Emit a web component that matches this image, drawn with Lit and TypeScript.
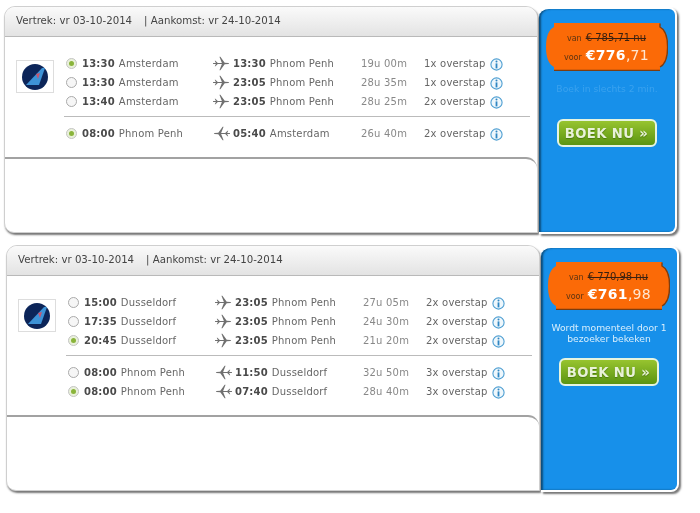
import { LitElement, html, css, svg } from "lit";
import { customElement } from "lit/decorators.js";

type Row = { on: boolean; dep: string; from: string; arr: string; to: string; dur: string; stops: string };
type Deal = {
  dep: string; arr: string; groups: { back: boolean; rows: Row[] }[];
  was: string; now: string; cents: string; note: string[]; faint: boolean; second: boolean;
};

const r = (on: boolean, dep: string, from: string, arr: string, to: string, dur: string, stops: string): Row =>
  ({ on, dep, from, arr, to, dur, stops });

const DEALS: Deal[] = [
  {
    dep: "vr 03-10-2014", arr: "vr 24-10-2014", was: "€ 785,71 nu", now: "€776", cents: ",71",
    note: ["Boek in slechts 2 min."], faint: true, second: false,
    groups: [
      { back: false, rows: [
        r(true, "13:30", "Amsterdam", "13:30", "Phnom Penh", "19u 00m", "1x overstap"),
        r(false, "13:30", "Amsterdam", "23:05", "Phnom Penh", "28u 35m", "1x overstap"),
        r(false, "13:40", "Amsterdam", "23:05", "Phnom Penh", "28u 25m", "2x overstap"),
      ] },
      { back: true, rows: [
        r(true, "08:00", "Phnom Penh", "05:40", "Amsterdam", "26u 40m", "2x overstap"),
      ] },
    ],
  },
  {
    dep: "vr 03-10-2014", arr: "vr 24-10-2014", was: "€ 770,98 nu", now: "€761", cents: ",98",
    note: ["Wordt momenteel door 1", "bezoeker bekeken"], faint: false, second: true,
    groups: [
      { back: false, rows: [
        r(false, "15:00", "Dusseldorf", "23:05", "Phnom Penh", "27u 05m", "2x overstap"),
        r(false, "17:35", "Dusseldorf", "23:05", "Phnom Penh", "24u 30m", "2x overstap"),
        r(true, "20:45", "Dusseldorf", "23:05", "Phnom Penh", "21u 20m", "2x overstap"),
      ] },
      { back: true, rows: [
        r(false, "08:00", "Phnom Penh", "11:50", "Dusseldorf", "32u 50m", "3x overstap"),
        r(true, "08:00", "Phnom Penh", "07:40", "Dusseldorf", "28u 40m", "3x overstap"),
      ] },
    ],
  },
];

const plane = (back: boolean) => html`<svg class="plane ${back ? "flip" : ""}" viewBox="0 0 18 16">
  <path fill="#707070" d="M0 7.5 L3 7.5 L1.8 5 L2.6 5 L5 7.4 L9.4 7.4 L6.8 .8 L7.8 .8 L12.4 7.3 L16.4 7.4 Q18 8 16.4 8.6 L12.4 8.7 L7.8 15.2 L6.8 15.2 L9.4 8.6 L5 8.6 L2.6 11 L1.8 11 L3 8.5 L0 8.5 Z"/>
</svg>`;

const info = svg`<circle cx="6.5" cy="6.5" r="5.6" fill="#eef7fc" stroke="#4f9fd2" stroke-width="1.1"/>
  <circle cx="6.5" cy="3.6" r="1" fill="#2f86c2"/><rect x="5.6" y="5.4" width="1.8" height="5" fill="#2f86c2"/>`;

@customElement("app-root")
export class AppRoot extends LitElement {
  static styles = css`
    :host { display: block; width: 700px; height: 513px; background: #fff; overflow: hidden;
      font-family: "DejaVu Sans", Verdana, sans-serif; }
    .page { display: flex; flex-direction: column; gap: 12px; padding: 6px 0 0 4px; filter: blur(0.35px); }
    .card { display: flex; width: 673px; }
    .card.second { margin-left: 2px; }
    .left { width: 534px; box-sizing: border-box; border: 1px solid #cfcfcf; border-radius: 11px 12px 0 10px;
      box-shadow: 1px 2px 2px #777; background: #fff; display: flex; flex-direction: column; }
    .head { height: 30px; box-sizing: border-box; display: flex; align-items: center; gap: 12px; padding: 0 0 2px 11px;
      font-size: 10.2px; color: #444; border-radius: 10px 11px 0 0;
      background: linear-gradient(#fafafa, #e3e3e3); border-bottom: 1px solid #b9b9b9; }
    .body { display: flex; padding: 0 7px 14px 11px; }
    .logo { width: 38px; height: 33px; box-sizing: border-box; border: 1px solid #ddd; margin: 23px 10px 0 0; display: flex;
      align-items: center; justify-content: center; flex: none; }
    .logo svg { width: 28px; height: 28px; }
    .rows { flex: 1; }
    .group { padding: 17px 0 5px; }
    .group.back { padding: 7px 0 0; border-top: 1px solid #bbb; }
    .row { display: grid; grid-template-columns: 18px 131px 20px 128px 63px 66px 13px; height: 19px; align-items: center;
      font-size: 10px; color: #666; white-space: nowrap; letter-spacing: 0.02em; }
    .row b { color: #4a4a4a; font-weight: 700; margin-right: 4px; }
    .dur { color: #888; }
    .radio { width: 11px; height: 11px; box-sizing: border-box; border: 1px solid #aaa; border-radius: 50%; margin-left: 2px;
      background: #f6f6f6; display: flex; align-items: center; justify-content: center; }
    .radio.on { background: #e9f1da; border-color: #c4c4c4; }
    .radio.on::after { content: ""; width: 5px; height: 5px; border-radius: 50%; background: #8ab43a; }
    .plane { width: 17px; height: 15px; display: block; }
    .plane.flip { transform: scaleX(-1); }
    .info { width: 13px; height: 13px; display: block; margin-top: 1px; }
    .foot { flex: 1; min-height: 73px; border-top: 2px solid #a2a2a2; border-top-right-radius: 11px; }
    .panel { width: 138px; margin-left: 1px; margin-top: 1px; box-sizing: border-box; background: #1790ea; border: 2px solid #fff; border-left: 0;
      border-radius: 10px 8px 8px 0; box-shadow: 2px 2px 2px #777, inset 2px 0 2px #0c4d7c; display: flex; flex-direction: column;
      align-items: center; padding-top: 14px; margin-bottom: -1px; }
    .tag { position: relative; width: 122px; height: 48px; display: flex; flex-direction: column; align-items: center; justify-content: center; gap: 4px; margin-right: 1px; }
    .tag svg { position: absolute; inset: 0; width: 100%; height: 100%; }
    .line { position: relative; display: flex; align-items: baseline; gap: 4px; white-space: nowrap; }
    .small { font-size: 8px; color: #5c3412; }
    .was { font-size: 10px; color: #3a2110; text-decoration: line-through; }
    .now { font-size: 14px; font-weight: 700; color: #fff; letter-spacing: 0.02em; }
    .now span { font-weight: 400; color: #ffe6d0; }
    .note { height: 24px; margin-top: 12px; font-size: 9.2px; line-height: 11px; text-align: center; color: #d8eefc; white-space: nowrap; }
    .note.faint { color: #3aa2ef; }
    .btn { margin-top: 12px; width: 100px; height: 28px; box-sizing: border-box; border: 2px solid #e6f4e0; border-radius: 6px;
      background: linear-gradient(#97c42f, #5b9412); color: #e9f2d8; font-size: 13.2px; font-weight: 700; display: flex; align-items: center; justify-content: center;
      letter-spacing: 0.03em; text-shadow: 0 1px 1px #4c7a10; margin-right: 1px; }
  `;

  private logo() {
    return html`<svg viewBox="0 0 28 28"><circle cx="14" cy="14" r="13" fill="#0c2559"/>
      <path d="M21 5 L24 5 L18 22 L5 22 Z" fill="#3d92d6"/>
      <path d="M15 11 L19 10 L17 16 Z" fill="#c8546e"/></svg>`;
  }

  private tag() {
    return html`<svg viewBox="0 0 122 48" aria-hidden="true">
      <path fill="#fb6a07" d="M8 0 H114 V4 Q122 8 122 24 Q122 40 114 44 V48 H8 V44 Q0 40 0 24 Q0 8 8 4 Z"/>
      <path fill="none" stroke="#7c3d10" stroke-width="1.4" d="M8 47.4 H114 M114 .6 V4 Q121.6 8 121.6 24 Q121.6 40 114 44"/>
    </svg>`;
  }

  render() {
    return html`<div class="page">${DEALS.map((d) => html`
      <section class="card ${d.second ? "second" : ""}">
        <div class="left">
          <div class="head"><span>Vertrek: ${d.dep}</span><span>| Aankomst: ${d.arr}</span></div>
          <div class="body">
            <div class="logo">${this.logo()}</div>
            <div class="rows">${d.groups.map((g) => html`
              <div class="group ${g.back ? "back" : ""}">${g.rows.map((x) => html`
                <div class="row">
                  <span class="radio ${x.on ? "on" : ""}"></span>
                  <span><b>${x.dep}</b>${x.from}</span>
                  ${plane(g.back)}
                  <span><b>${x.arr}</b>${x.to}</span>
                  <span class="dur">${x.dur}</span>
                  <span>${x.stops}</span>
                  <svg class="info" viewBox="0 0 13 13">${info}</svg>
                </div>`)}
              </div>`)}
            </div>
          </div>
          <div class="foot"></div>
        </div>
        <aside class="panel">
          <div class="tag">${this.tag()}
            <div class="line"><span class="small">van</span><span class="was">${d.was}</span></div>
            <div class="line"><span class="small">voor</span><span class="now">${d.now}<span>${d.cents}</span></span></div>
          </div>
          <div class="note ${d.faint ? "faint" : ""}">${d.note.map((n) => html`<div>${n}</div>`)}</div>
          <div class="btn">BOEK NU »</div>
        </aside>
      </section>`)}
    </div>`;
  }
}
